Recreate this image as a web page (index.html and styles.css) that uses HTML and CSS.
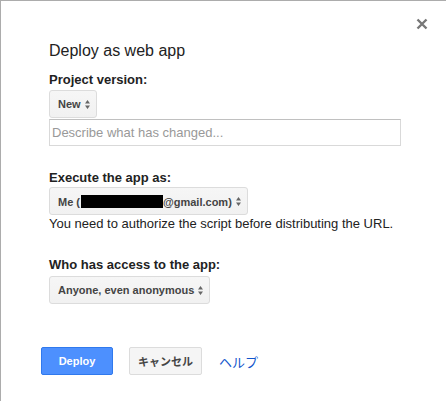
FILE: index.html
```html
<!DOCTYPE html>
<html>
<head>
<meta charset="utf-8">
<link rel="stylesheet" href="styles.css">
</head>
<body>
<div class="dialog">
  <button class="close" aria-label="Close">
    <svg width="12" height="12" viewBox="0 0 12 12"><path d="M1.5 1.5 L10.5 10.5 M10.5 1.5 L1.5 10.5" stroke="#777" stroke-width="2.4" fill="none"/></svg>
  </button>
  <div class="content">
    <h1 class="title">Deploy as web app</h1>
    <div class="label l1">Project version:</div>
    <div class="select s1"><span>New</span><svg class="arr" width="5" height="9" viewBox="0 0 5 9"><path d="M2.5 0 L5 3.5 L0 3.5 Z M0 5.5 L5 5.5 L2.5 9 Z" fill="#666"/></svg></div>
    <div class="input"><span class="ph">Describe what has changed...</span></div>
    <div class="label l2">Execute the app as:</div>
    <div class="select s2"><span>Me (<span class="redact"></span>@gmail.com)</span><svg class="arr" width="5" height="9" viewBox="0 0 5 9"><path d="M2.5 0 L5 3.5 L0 3.5 Z M0 5.5 L5 5.5 L2.5 9 Z" fill="#666"/></svg></div>
    <div class="note">You need to authorize the script before distributing the URL.</div>
    <div class="label l3">Who has access to the app:</div>
    <div class="select s3"><span>Anyone, even anonymous</span><svg class="arr" width="5" height="9" viewBox="0 0 5 9"><path d="M2.5 0 L5 3.5 L0 3.5 Z M0 5.5 L5 5.5 L2.5 9 Z" fill="#666"/></svg></div>
  </div>
  <div class="footer">
    <button class="btn primary">Deploy</button>
    <button class="btn secondary">キャンセル</button>
    <a class="help" href="#">ヘルプ</a>
  </div>
</div>
</body>
</html>
```
FILE: styles.css
```css
html, body {
  margin: 0;
  padding: 0;
  background: #fff;
}
body {
  font-family: "Liberation Sans", Arial, "Noto Sans CJK JP", sans-serif;
  color: #222;
}
.dialog {
  position: relative;
  box-sizing: border-box;
  width: 446px;
  height: 401px;
  border-top: 1px solid #acacac;
  border-left: 1px solid #acacac;
  padding-top: 40px;
}
.close {
  position: absolute;
  top: 16px;
  left: 414px;
  width: 14px;
  height: 14px;
  padding: 1px;
  border: 0;
  background: none;
  display: flex;
  align-items: center;
  justify-content: center;
}
.content {
  display: flex;
  flex-direction: column;
  align-items: flex-start;
  padding-left: 48px;
}
.title {
  margin: 0;
  font-size: 16px;
  font-weight: normal;
  line-height: 20px;
  color: #222;
}
.label {
  font-size: 13px;
  font-weight: bold;
  line-height: 16px;
  color: #222;
}
.l1 { margin-top: 11px; }
.l2 { margin-top: 24px; }
.l3 { margin-top: 25px; }
.select {
  box-sizing: border-box;
  display: inline-flex;
  align-items: center;
  gap: 4px;
  height: 28px;
  padding: 0 6px 0 8px;
  border: 1px solid #dcdcdc;
  border-radius: 3px;
  background: linear-gradient(#f6f6f6, #f1f1f1);
  font-size: 11px;
  font-weight: bold;
  color: #444;
}
.s1 { margin-top: 2px; }
.s2 { margin-top: 1px; }
.s3 { margin-top: 3px; }
.redact {
  display: inline-block;
  width: 82px;
  height: 13px;
  background: #000;
  vertical-align: -2px;
  margin-left: 1px;
}
.arr { flex: none; }
.input {
  box-sizing: border-box;
  margin-top: 1px;
  width: 352px;
  height: 27px;
  border: 1px solid #d9d9d9;
  border-top-color: #c0c0c0;
  padding: 0 2px;
  display: flex;
  align-items: center;
  font-size: 13px;
}
.ph { color: #999; }
.note {
  margin-top: 1px;
  font-size: 13px;
  line-height: 16px;
  color: #222;
}
.footer {
  display: flex;
  align-items: center;
  padding-left: 40px;
  margin-top: 43px;
}
.btn {
  box-sizing: border-box;
  height: 28px;
  border-radius: 2px;
  font-family: "Liberation Sans", Arial, "Noto Sans CJK JP", sans-serif;
  font-size: 11px;
  font-weight: bold;
  padding: 0;
}
.primary {
  width: 72px;
  background: #4d90fe;
  border: 1px solid #3079ed;
  color: #fff;
}
.secondary {
  width: 73px;
  margin-left: 16px;
  background: #f5f5f5;
  border: 1px solid #dcdcdc;
  color: #444;
}
.help {
  margin-left: 17px;
  font-family: "Noto Sans CJK JP", sans-serif;
  font-size: 13px;
  color: #15c;
  text-decoration: none;
}
```
